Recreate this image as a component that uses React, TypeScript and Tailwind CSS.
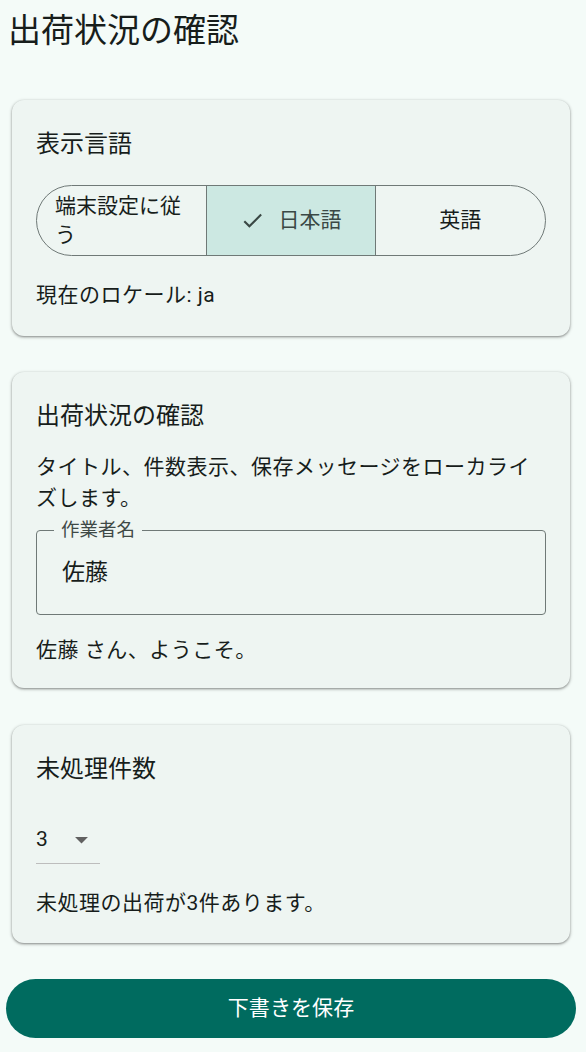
import React from 'react';

const font = "font-['Roboto','Noto_Sans_CJK_JP',sans-serif]";

function Card({ className = '', children }: { className?: string; children: React.ReactNode }) {
  return (
    <div
      className={`ml-3 mr-4 rounded-xl bg-[#eef5f2] px-6 pt-7 shadow-[0_1px_2px_rgba(0,0,0,0.3),0_1px_3px_1px_rgba(0,0,0,0.15)] ${className}`}
    >
      {children}
    </div>
  );
}

function CardTitle({ children }: { children: React.ReactNode }) {
  return <h2 className="text-[24px] leading-[32px] text-[#171d1b]">{children}</h2>;
}

function LocaleSegments() {
  return (
    <div className="mt-[25px] grid h-[71px] grid-cols-3 overflow-hidden rounded-full border border-[#6f7977]">
      <button className="flex min-w-0 items-center px-[18px] text-left text-[21px] leading-[29px] text-[#171d1b]">
        端末設定に従う
      </button>
      <button className="flex min-w-0 items-center justify-center gap-[13px] border-x border-[#6f7977] bg-[#cce8e2] text-[21px] text-[#3a4845]">
        <svg viewBox="0 0 24 24" className="h-[25px] w-[25px]" fill="currentColor">
          <path d="M9 16.17L4.83 12l-1.42 1.41L9 19 21 7l-1.41-1.41z" />
        </svg>
        <span>日本語</span>
      </button>
      <button className="flex min-w-0 items-center justify-center text-[21px] text-[#171d1b]">
        英語
      </button>
    </div>
  );
}

export default function App() {
  return (
    <div className={`min-h-screen w-full bg-[#f4fbf8] pb-[14px] ${font}`}>
      <h1 className="pl-2 pt-[11px] text-[33px] leading-[40px] text-[#171d1b]">出荷状況の確認</h1>

      <Card className="mt-[49px] pb-[25px]">
        <CardTitle>表示言語</CardTitle>
        <LocaleSegments />
        <p className="mt-6 text-[21px] leading-[31px] tracking-[0.5px] text-[#171d1b]">現在のロケール: ja</p>
      </Card>

      <Card className="mt-9 pb-[22px]">
        <CardTitle>出荷状況の確認</CardTitle>
        <p className="mt-5 text-[21px] leading-[31px] tracking-[0.5px] text-[#171d1b]">
          タイトル、件数表示、保存メッセージをローカライズします。
        </p>
        <fieldset className="mt-[5px] rounded-[4px] border border-[#6f7977] pb-[25px]">
          <legend className="ml-[17px] px-[7px] text-[18.5px] leading-[22px] text-[#3f4946]">作業者名</legend>
          <div className="pl-[25px] pt-4 text-[23px] leading-[32px] text-[#171d1b]">佐藤</div>
        </fieldset>
        <p className="mt-5 text-[21px] leading-[31px] tracking-[0.5px] text-[#171d1b]">佐藤 さん、ようこそ。</p>
      </Card>

      <Card className="mt-[37px] pb-6">
        <CardTitle>未処理件数</CardTitle>
        <div className="mt-[30px] flex h-[49px] w-[64px] items-center justify-between border-b border-[#bdbdbd]">
          <span className="text-[21px] leading-[28px] text-[#171d1b]">3</span>
          <svg viewBox="0 0 24 24" className="mr-[3px] h-[31px] w-[31px]" fill="#616161">
            <path d="M7 10l5 5 5-5z" />
          </svg>
        </div>
        <p className="mt-6 text-[21px] leading-[31px] tracking-[0.5px] text-[#171d1b]">未処理の出荷が3件あります。</p>
      </Card>

      <button className="mt-9 ml-[6px] mr-[10px] block h-[59px] w-[570px] rounded-full bg-[#006b5f] text-[21px] tracking-[0.1px] text-white">
        下書きを保存
      </button>
    </div>
  );
}
